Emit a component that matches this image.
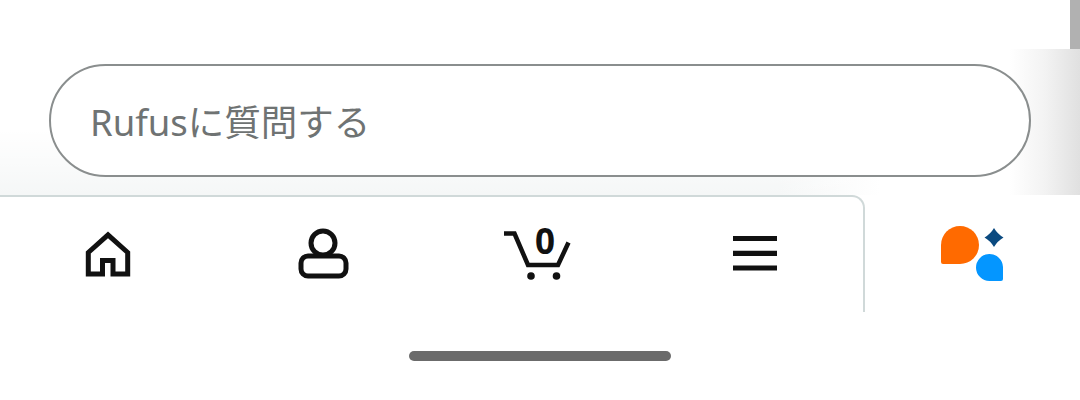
<div class="page">
  <span class="scrollbar"></span>
  <section class="top">
    <span class="shade"></span>
    <div class="ask">Rufusに質問する</div>
  </section>
  <nav class="nav">
    <div class="tabs">
      <a class="tab" aria-label="ホーム">
        <svg viewBox="0 0 72 64" width="72" height="64">
          <path class="line" d="M16.3 50V28.5L36 10.8 55.7 28.5V50H41V36.5H30.5V50Z" />
        </svg>
      </a>
      <a class="tab" aria-label="アカウント">
        <svg viewBox="0 0 72 64" width="72" height="64">
          <circle class="line" cx="35" cy="19" r="12" />
          <rect class="line" x="13" y="32" width="45" height="20" rx="7" />
        </svg>
      </a>
      <a class="tab cart-tab" aria-label="カート">
        <svg viewBox="0 0 72 64" width="72" height="64">
          <path class="line cart" d="M0 9.5H10.5L24 41H54L64.5 18.5" />
          <circle class="dot" cx="27" cy="52" r="3.8" />
          <circle class="dot" cx="52.5" cy="52" r="3.8" />
        </svg>
        <span class="count">0</span>
      </a>
      <a class="tab" aria-label="メニュー">
        <svg viewBox="0 0 72 64" width="72" height="64">
          <path class="line bars" d="M13 14.5H57M13 29.3H57M13 44H57" />
        </svg>
      </a>
    </div>
    <div class="assistant">
      <svg viewBox="0 0 72 64" width="72" height="64" aria-label="Rufus">
        <path class="orange" d="M5 21A19 19 0 1 1 24 40H7a2 2 0 0 1-2-2Z" />
        <path class="blue" d="M67 43V55a2 2 0 0 1-2 2H53.5A13.5 13.5 0 1 1 67 43Z" />
        <path class="star" d="M58 4Q61.5 10 67.5 13.5 61.5 17 58 23 54.5 17 48.5 13.5 54.5 10 58 4Z" />
      </svg>
    </div>
  </nav>
  <div class="home-row"><span class="indicator"></span></div>
</div>

<style>
  :global(body) {
    margin: 0;
    background: #fff;
  }
  .page {
    position: relative;
    width: 1080px;
    height: 400px;
    overflow: hidden;
    background: #fff;
    font-family: "Noto Sans", "Noto Sans CJK JP", sans-serif;
  }
  .scrollbar {
    position: absolute;
    top: 0;
    right: 0;
    width: 10px;
    height: 49px;
    background: #b1b1b1;
  }
  .top {
    position: relative;
    box-sizing: border-box;
    height: 195px;
    padding: 64px 49px 0;
    background: linear-gradient(90deg, #f5f7f7 0, #f5f7f7 780px, #fff 880px) bottom / 100% 65px no-repeat;
  }
  .top::before {
    content: "";
    position: absolute;
    left: 0;
    right: 0;
    bottom: 0;
    height: 65px;
    background: linear-gradient(180deg, #fff, rgba(255, 255, 255, 0));
  }
  .shade {
    position: absolute;
    top: 49px;
    right: 0;
    bottom: 0;
    width: 70px;
    background: linear-gradient(90deg, rgba(224, 224, 224, 0), rgba(224, 224, 224, 0.4) 50%, #e0e0e0);
  }
  .ask {
    position: relative;
    box-sizing: border-box;
    display: flex;
    align-items: center;
    width: 982px;
    height: 113px;
    padding: 4px 0 0 39px;
    border: 2.5px solid #8a8e8e;
    border-radius: 56.5px;
    background: #fff;
    color: #6f7373;
    font-size: 36.5px;
    line-height: 1;
  }
  .nav {
    display: flex;
    height: 117px;
  }
  .tabs {
    box-sizing: border-box;
    display: grid;
    grid-template-columns: repeat(4, 216px);
    width: 865px;
    border-top: 2px solid #d0d9d9;
    border-right: 2px solid #d0d9d9;
    border-top-right-radius: 13px;
  }
  .tab {
    display: flex;
    justify-content: center;
    padding-top: 27px;
  }
  .cart-tab {
    position: relative;
  }
  svg {
    display: block;
  }
  .line {
    fill: none;
    stroke: #111;
    stroke-width: 5;
  }
  .cart {
    stroke-width: 4.5;
  }
  .bars {
    stroke-width: 5.2;
  }
  .dot {
    fill: #111;
  }
  .count {
    position: absolute;
    top: 26px;
    left: 103px;
    width: 20px;
    color: #111;
    font-size: 35px;
    font-weight: 700;
    line-height: 1;
    text-align: center;
  }
  .assistant {
    flex: 1;
    padding: 29px 0 0 71px;
  }
  .orange {
    fill: #ff6a00;
  }
  .blue {
    fill: #0496ff;
  }
  .star {
    fill: #0b4a80;
  }
  .home-row {
    display: flex;
    justify-content: center;
    padding-top: 39px;
  }
  .indicator {
    width: 262px;
    height: 10px;
    border-radius: 5px;
    background: #6b6b6b;
  }
</style>
